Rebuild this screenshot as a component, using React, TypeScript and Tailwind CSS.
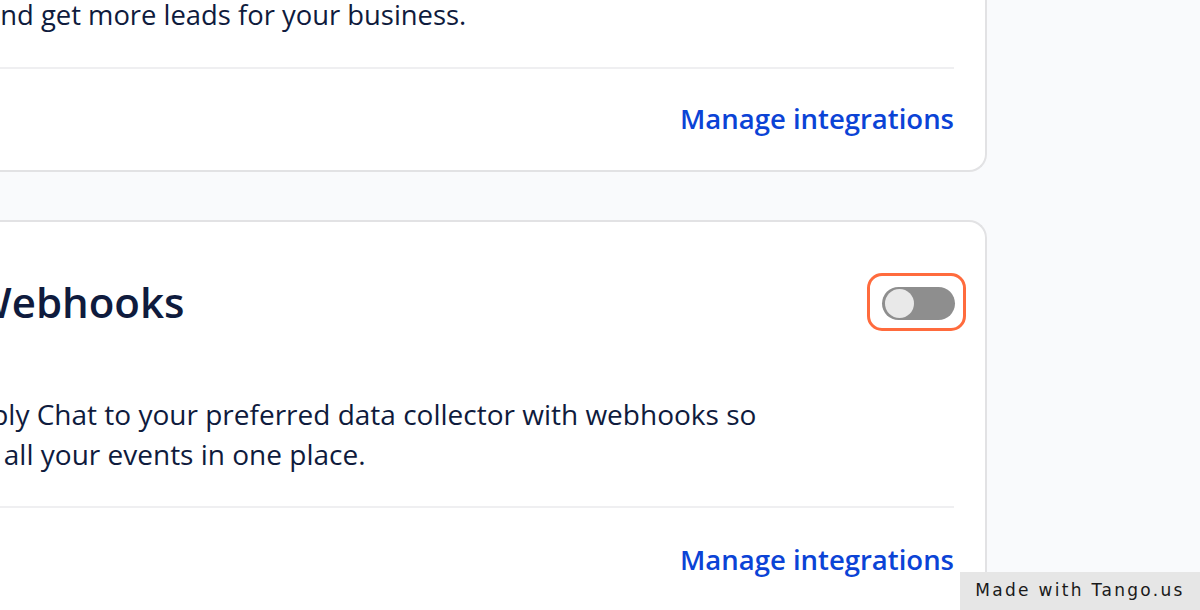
import React from "react";

const font = { fontFamily: '"Open Sans", "Noto Sans", sans-serif' };

function Toggle() {
  return (
    <div className="-mr-[12px] mt-[1px] flex h-[58px] w-[99px] items-center justify-center rounded-[15px] border-[3px] border-[#ff6b3d]">
      <div className="ml-[3px] mt-[3px] flex h-[33px] w-[73px] items-center rounded-full bg-[#8e8e8e] px-[3px]">
        <div className="h-[29px] w-[29px] rounded-full bg-[#e9e9e9]" />
      </div>
    </div>
  );
}

export default function App() {
  return (
    <div
      className="relative h-[610px] w-[1200px] overflow-hidden bg-[#f9fafc] text-[#0f1b3d]"
      style={font}
    >
      <div className="-ml-[187px] -mt-[25px] flex w-[1174px] flex-col gap-[48px]">
        {/* Card 1 */}
        <div className="rounded-b-[18px] border-2 border-t-0 border-[#e2e2e4] bg-white pl-[35px] pr-[31px] pt-[20px] pb-[31px]">
          <p className="whitespace-nowrap pl-[135px] text-[27.4px] leading-[40px]">
            and get more leads for your business.
          </p>
          <div className="mt-[32px] h-[2px] bg-[#efeff1]" />
          <div className="mt-[30px] flex justify-end">
            <a className="text-[27.5px] font-semibold leading-[40px] text-[#0b43d6]">
              Manage integrations
            </a>
          </div>
        </div>

        {/* Card 2 */}
        <div className="h-[500px] rounded-t-[18px] border-2 border-b-0 border-[#e2e2e4] bg-white pl-[35px] pr-[31px] pt-[50px]">
          <div className="flex items-center justify-between">
            <div className="flex items-center">
              <div className="w-[122px]" />
              <h2 className="text-[42px] font-semibold leading-[50px]">Webhooks</h2>
            </div>
            <Toggle />
          </div>
          <p className="-ml-[7px] mt-[63px] whitespace-nowrap text-[28px] leading-[40px]">
            Connect Reply Chat to your preferred data collector with webhooks so
            <br />
            you can see all your events in one place.
          </p>
          <div className="mt-[32px] h-[2px] bg-[#efeff1]" />
          <div className="mt-[32px] flex justify-end">
            <a className="text-[27.5px] font-semibold leading-[40px] text-[#0b43d6]">
              Manage integrations
            </a>
          </div>
        </div>
      </div>

      <div
        className="absolute bottom-0 right-0 flex h-[38px] w-[240px] items-center justify-center bg-[#e6e6e6] text-[17px] tracking-[2.3px] text-[#1a1a1a]"
        style={{ fontFamily: '"DejaVu Sans", sans-serif' }}
      >
        Made with Tango.us
      </div>
    </div>
  );
}
